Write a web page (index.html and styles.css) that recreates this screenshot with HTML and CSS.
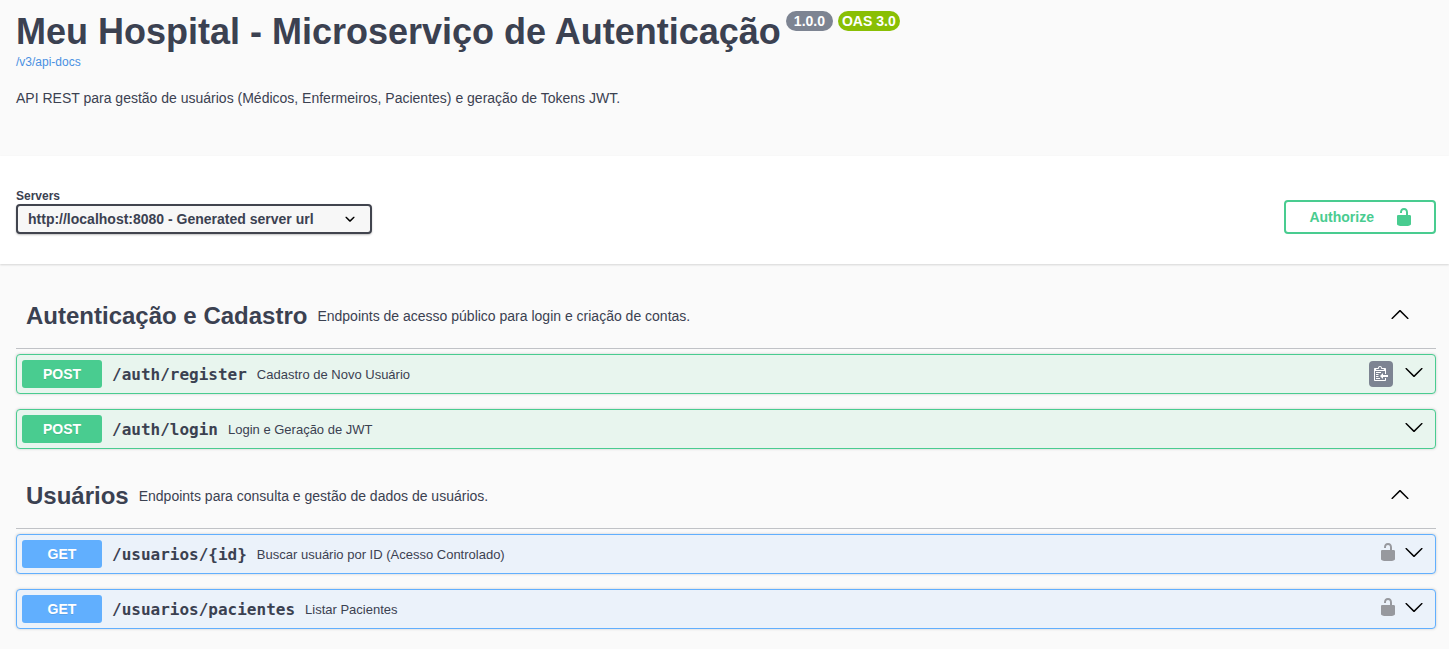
FILE: index.html
```html
<!DOCTYPE html>
<html lang="pt-BR">
<head>
<meta charset="utf-8">
<meta name="viewport" content="width=device-width, initial-scale=1">
<title>Meu Hospital - Microserviço de Autenticação</title>
<link rel="stylesheet" href="styles.css">
</head>
<body>
<svg class="sprite" aria-hidden="true">
  <symbol id="unlocked" viewBox="0 0 20 20"><path d="M15.8 8H14V5.6C14 2.703 12.665 1 10 1 7.334 1 6 2.703 6 5.6V6h2v-.801C8 3.754 8.797 3 10 3c1.203 0 2 .754 2 2.199V8H4c-.553 0-1 .646-1 1.199V17c0 .549.428 1.139.951 1.307l1.197.387C5.672 18.861 6.55 19 7.1 19h5.8c.549 0 1.428-.139 1.951-.307l1.196-.387c.524-.167.953-.757.953-1.306V9.199C17 8.646 16.352 8 15.8 8z"/></symbol>
  <symbol id="arrow-down" viewBox="0 0 20 20"><path d="M17.418 6.109c.272-.268.709-.268.979 0s.271.701 0 .969l-7.908 7.83c-.27.268-.707.268-.979 0l-7.908-7.83c-.27-.268-.27-.701 0-.969.271-.268.709-.268.979 0L10 13.25l7.418-7.141z"/></symbol>
  <symbol id="arrow-up" viewBox="0 0 20 20"><path d="M17.418 14.908c.272.268.709.268.979 0s.271-.701 0-.969l-7.908-7.83c-.27-.268-.707-.268-.979 0l-7.908 7.83c-.27.268-.27.701 0 .969.271.268.709.268.979 0L10 7.767l7.418 7.141z"/></symbol>
  <symbol id="chevron" viewBox="0 0 20 20"><path d="M13.418 7.859c.271-.268.709-.268.978 0 .27.268.272.701 0 .969l-3.908 3.83c-.27.268-.707.268-.979 0l-3.908-3.83c-.27-.267-.27-.701 0-.969.271-.268.709-.268.978 0L10 11l3.418-3.141z"/></symbol>
  <symbol id="copy" viewBox="0 0 15 16"><path transform="translate(0 -1)" d="M2 13h4v1H2v-1zm5-6H2v1h5V7zm2 3V8l-3 3 3 3v-2h5v-2H9zM4.5 9H2v1h2.5V9zM2 12h2.5v-1H2v1zm9 1h1v2c-.02.28-.11.52-.3.7-.19.18-.42.28-.7.3H1c-.55 0-1-.45-1-1V4c0-.55.45-1 1-1h3c0-1.11.89-2 2-2 1.11 0 2 .89 2 2h3c.55 0 1 .45 1 1v5h-1V6H1v9h10v-2zM2 5h8c0-.55-.45-1-1-1H8c-.55 0-1-.45-1-1s-.45-1-1-1-1 .45-1 1-.45 1-1 1H3c-.55 0-1 .45-1 1z"/></symbol>
</svg>

<header class="info">
  <div class="title-row">
    <h1 class="title">Meu Hospital - Microserviço de Autenticação</h1>
    <span class="badge badge-version">1.0.0</span>
    <span class="badge badge-oas">OAS 3.0</span>
  </div>
  <a class="docs-link" href="/v3/api-docs">/v3/api-docs</a>
  <p class="description">API REST para gestão de usuários (Médicos, Enfermeiros, Pacientes) e geração de Tokens JWT.</p>
</header>

<section class="scheme">
  <div class="servers">
    <label class="servers-label" for="servers">Servers</label>
    <div class="select-wrap">
      <select class="servers-select" id="servers">
        <option>http://localhost:8080 - Generated server url</option>
      </select>
      <svg class="icon select-icon" aria-hidden="true"><use href="#chevron"/></svg>
    </div>
  </div>
  <button class="authorize" type="button">
    <span>Authorize</span>
    <svg class="icon" aria-hidden="true"><use href="#unlocked"/></svg>
  </button>
</section>

<main class="operations">
  <section class="tag">
    <div class="tag-head">
      <h2 class="tag-name">Autenticação e Cadastro</h2>
      <p class="tag-text">Endpoints de acesso público para login e criação de contas.</p>
      <button class="icon-button" type="button" aria-label="Collapse operation"><svg class="icon"><use href="#arrow-up"/></svg></button>
    </div>
    <div class="op-list">
      <article class="op post">
        <button class="op-main" type="button"><span class="method">POST</span><span class="path">/auth/register</span><span class="summary">Cadastro de Novo Usuário</span></button>
        <button class="copy" type="button" aria-label="Copy to clipboard"><svg class="copy-icon"><use href="#copy"/></svg></button>
        <button class="icon-button" type="button" aria-label="Expand operation"><svg class="icon"><use href="#arrow-down"/></svg></button>
      </article>
      <article class="op post">
        <button class="op-main" type="button"><span class="method">POST</span><span class="path">/auth/login</span><span class="summary">Login e Geração de JWT</span></button>
        <button class="icon-button" type="button" aria-label="Expand operation"><svg class="icon"><use href="#arrow-down"/></svg></button>
      </article>
    </div>
  </section>

  <section class="tag">
    <div class="tag-head">
      <h2 class="tag-name">Usuários</h2>
      <p class="tag-text">Endpoints para consulta e gestão de dados de usuários.</p>
      <button class="icon-button" type="button" aria-label="Collapse operation"><svg class="icon"><use href="#arrow-up"/></svg></button>
    </div>
    <div class="op-list">
      <article class="op get">
        <button class="op-main" type="button"><span class="method">GET</span><span class="path">/usuarios/{id}</span><span class="summary">Buscar usuário por ID (Acesso Controlado)</span></button>
        <button class="icon-button lock" type="button" aria-label="Authorization button unlocked"><svg class="icon"><use href="#unlocked"/></svg></button>
        <button class="icon-button" type="button" aria-label="Expand operation"><svg class="icon"><use href="#arrow-down"/></svg></button>
      </article>
      <article class="op get">
        <button class="op-main" type="button"><span class="method">GET</span><span class="path">/usuarios/pacientes</span><span class="summary">Listar Pacientes</span></button>
        <button class="icon-button lock" type="button" aria-label="Authorization button unlocked"><svg class="icon"><use href="#unlocked"/></svg></button>
        <button class="icon-button" type="button" aria-label="Expand operation"><svg class="icon"><use href="#arrow-down"/></svg></button>
      </article>
    </div>
  </section>
</main>
</body>
</html>
```

FILE: styles.css
```css
* {
  box-sizing: border-box;
}

body {
  margin: 0;
  background: #fafafa;
  color: #3b4151;
  font-family: "Liberation Sans", Arial, sans-serif;
  font-size: 14px;
}

h1, h2, p {
  margin: 0;
}

button {
  font: inherit;
  color: inherit;
  cursor: pointer;
}

.sprite {
  display: none;
}

.icon {
  display: block;
  width: 20px;
  height: 20px;
  fill: currentColor;
}

.info {
  padding: 11px 13px 48px 16px;
}

.title-row {
  display: flex;
  align-items: flex-start;
  gap: 5px;
}

.title {
  font-size: 36px;
  line-height: 42px;
}

.badge {
  border-radius: 10px;
  color: #fff;
  font-weight: bold;
  line-height: 20px;
}

.badge-version {
  padding: 0 8px;
  background: #7d8492;
}

.badge-oas {
  padding: 0 4px;
  background: #89bf04;
}

.docs-link {
  display: block;
  width: fit-content;
  color: #4990e2;
  font-size: 12px;
  line-height: 18px;
  text-decoration: none;
}

.description {
  margin-top: 17px;
  line-height: 20px;
}

.scheme {
  display: flex;
  justify-content: space-between;
  align-items: flex-end;
  padding: 32px 13px 30px 16px;
  background: #fff;
  box-shadow: 0 1px 2px rgba(0, 0, 0, 0.15);
}

.servers-label {
  display: block;
  font-size: 12px;
  font-weight: bold;
  line-height: 16px;
}

.select-wrap {
  display: grid;
  align-items: center;
}

.servers-select {
  grid-area: 1 / 1;
  height: 30px;
  padding: 0 56px 0 10px;
  appearance: none;
  border: 2px solid #41444e;
  border-radius: 4px;
  background: #f7f7f7;
  box-shadow: 0 1px 2px rgba(0, 0, 0, 0.25);
  color: inherit;
  font: bold 14px "Liberation Sans", Arial, sans-serif;
}

.select-icon {
  grid-area: 1 / 1;
  justify-self: end;
  margin-right: 12px;
  color: #000;
  pointer-events: none;
}

.authorize {
  display: flex;
  align-items: center;
  gap: 20px;
  height: 34px;
  padding: 0 20px 0 23px;
  border: 2px solid #49cc90;
  border-radius: 4px;
  background: transparent;
  color: #49cc90;
  font-weight: bold;
}

.operations {
  display: grid;
  gap: 15px;
  padding: 20px 13px 20px 16px;
}

.tag-head {
  display: flex;
  align-items: center;
  gap: 10px;
  min-height: 65px;
  padding: 0 26px 0 10px;
  border-bottom: 1px solid rgba(59, 65, 81, 0.3);
}

.tag-name {
  font-size: 24px;
  line-height: 32px;
}

.tag-text {
  flex: 1;
}

.icon-button {
  padding: 0 0 4px;
  border: 0;
  background: none;
  color: #000;
}

.op-list {
  display: grid;
  gap: 15px;
  margin-top: 5px;
}

.op {
  display: flex;
  align-items: center;
  padding: 5px 11px 5px 5px;
  border: 1px solid;
  border-radius: 4px;
  box-shadow: 0 0 3px rgba(0, 0, 0, 0.19);
}

.post {
  border-color: #49cc90;
  background: #e8f5ee;
}

.get {
  border-color: #61affe;
  background: #ebf2fa;
}

.op-main {
  display: flex;
  flex: 1;
  align-items: center;
  gap: 10px;
  padding: 0;
  border: 0;
  background: none;
  text-align: left;
}

.method {
  width: 80px;
  border-radius: 3px;
  color: #fff;
  font-weight: bold;
  line-height: 28px;
  text-align: center;
  text-shadow: 0 1px 0 rgba(0, 0, 0, 0.1);
}

.post .method {
  background: #49cc90;
}

.get .method {
  background: #61affe;
}

.path {
  font-family: "DejaVu Sans Mono", monospace;
  font-size: 16px;
  font-weight: bold;
}

.summary {
  font-size: 13px;
}

.copy {
  display: grid;
  place-items: center;
  width: 24px;
  height: 26px;
  margin-right: 11px;
  padding: 0;
  border: 0;
  border-radius: 4px;
  background: #7d8492;
}

.copy-icon {
  width: 15px;
  height: 16px;
  fill: #fff;
}

.lock {
  margin-right: 6px;
  color: #97999e;
}
```
